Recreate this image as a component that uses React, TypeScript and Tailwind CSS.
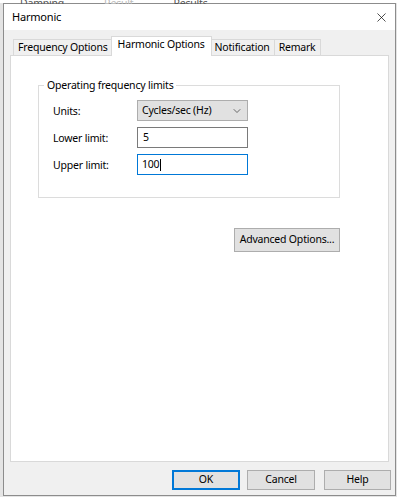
import { ChevronDown, X } from 'lucide-react'

const font = { fontFamily: '"Noto Sans", "Open Sans", sans-serif' }

function Tab({ label, active }: { label: string; active?: boolean }) {
  if (active) {
    return (
      <div className="relative z-10 -mx-[2px] -mb-px flex h-[20px] items-center border border-b-0 border-[#d9d9d9] bg-white px-[6px] pb-[3px]">
        {label}
      </div>
    )
  }
  return (
    <div className="flex h-[16px] items-center border border-b-0 border-[#d9d9d9] bg-[#f0f0f0] px-[4px]">
      {label}
    </div>
  )
}

function Row({ label, children }: { label: string; children: React.ReactNode }) {
  return (
    <div className="flex h-[21px] items-center">
      <div className="w-[84px] pt-[2px]">{label}</div>
      {children}
    </div>
  )
}

export default function App() {
  return (
    <div className="relative h-[497px] w-[397px] overflow-hidden bg-[#e4e4e4] text-[10.5px] tracking-[-0.2px] text-black" style={font}>
      {/* behind-the-dialog strip */}
      <div className="flex h-[3px] items-end gap-10 bg-white pl-[20px] text-[#555] leading-none">
        <span className="-mb-[5px]">Damping</span>
        <span className="-mb-[5px] text-[#bbb]">Result</span>
        <span className="-mb-[5px]">Results</span>
      </div>

      <div className="ml-[3px] flex h-[493px] w-[393px] flex-col border border-[#8c8c8c] bg-[#f0f0f0]">
        {/* Title bar */}
        <div className="flex h-[26px] shrink-0 items-center justify-between bg-white pl-[8px] pr-[6px]">
          <span className="text-[11px]">Harmonic</span>
          <X size={15} strokeWidth={1.1} className="text-black" />
        </div>

        {/* Body */}
        <div className="flex flex-1 flex-col px-[6px] pt-[6px]">
          <div className="flex items-end pl-[3px]">
            <Tab label="Frequency Options" />
            <Tab label="Harmonic Options" active />
            <Tab label="Notification" />
            <div className="flex h-[16px] items-center border border-b-0 border-l-0 border-[#d9d9d9] bg-[#f0f0f0] px-[4px]">
              Remark
            </div>
          </div>

          <div className="h-[407px] w-[379px] border border-[#d9d9d9] bg-white pl-[27px] pt-[21px]">
            <fieldset className="h-[121px] w-[302px] border border-[#dcdcdc] px-[14px]">
              <legend className="-ml-[9px] px-[3px] leading-[16px]">Operating frequency limits</legend>
              <div className="flex flex-col gap-[6px] pt-[7px]">
                <Row label="Units:">
                  <div className="flex h-[21px] w-[111px] items-center justify-between border border-[#adadad] bg-[#e1e1e1] pl-[4px] pr-[4px]">
                    <span>Cycles/sec (Hz)</span>
                    <ChevronDown size={12} strokeWidth={1.4} className="text-[#333]" />
                  </div>
                </Row>
                <Row label="Lower limit:">
                  <div className="flex h-[21px] w-[111px] items-center border border-[#7a7a7a] bg-white pl-[5px]">5</div>
                </Row>
                <Row label="Upper limit:">
                  <div className="flex h-[21px] w-[111px] items-center border border-[#0078d7] bg-white pl-[4px]">
                    100<span className="ml-px inline-block h-[12px] w-px bg-black" />
                  </div>
                </Row>
              </div>
            </fieldset>

            <div className="flex w-[302px] justify-end pt-[30px]">
              <div className="flex h-[24px] w-[106px] items-center justify-center border border-[#adadad] bg-[#e1e1e1]">
                Advanced Options...
              </div>
            </div>
          </div>

          {/* Buttons */}
          <div className="flex justify-end gap-[7px] pt-[8px]">
            <div className="flex h-[20px] w-[68px] items-center justify-center border-2 border-[#0078d7] bg-[#e1e1e1]">OK</div>
            <div className="flex h-[20px] w-[68px] items-center justify-center border border-[#adadad] bg-[#e1e1e1]">Cancel</div>
            <div className="-mr-[2px] ml-[2px] flex h-[20px] w-[67px] items-center justify-center border border-[#adadad] bg-[#e1e1e1]">Help</div>
          </div>
        </div>
      </div>
    </div>
  )
}
